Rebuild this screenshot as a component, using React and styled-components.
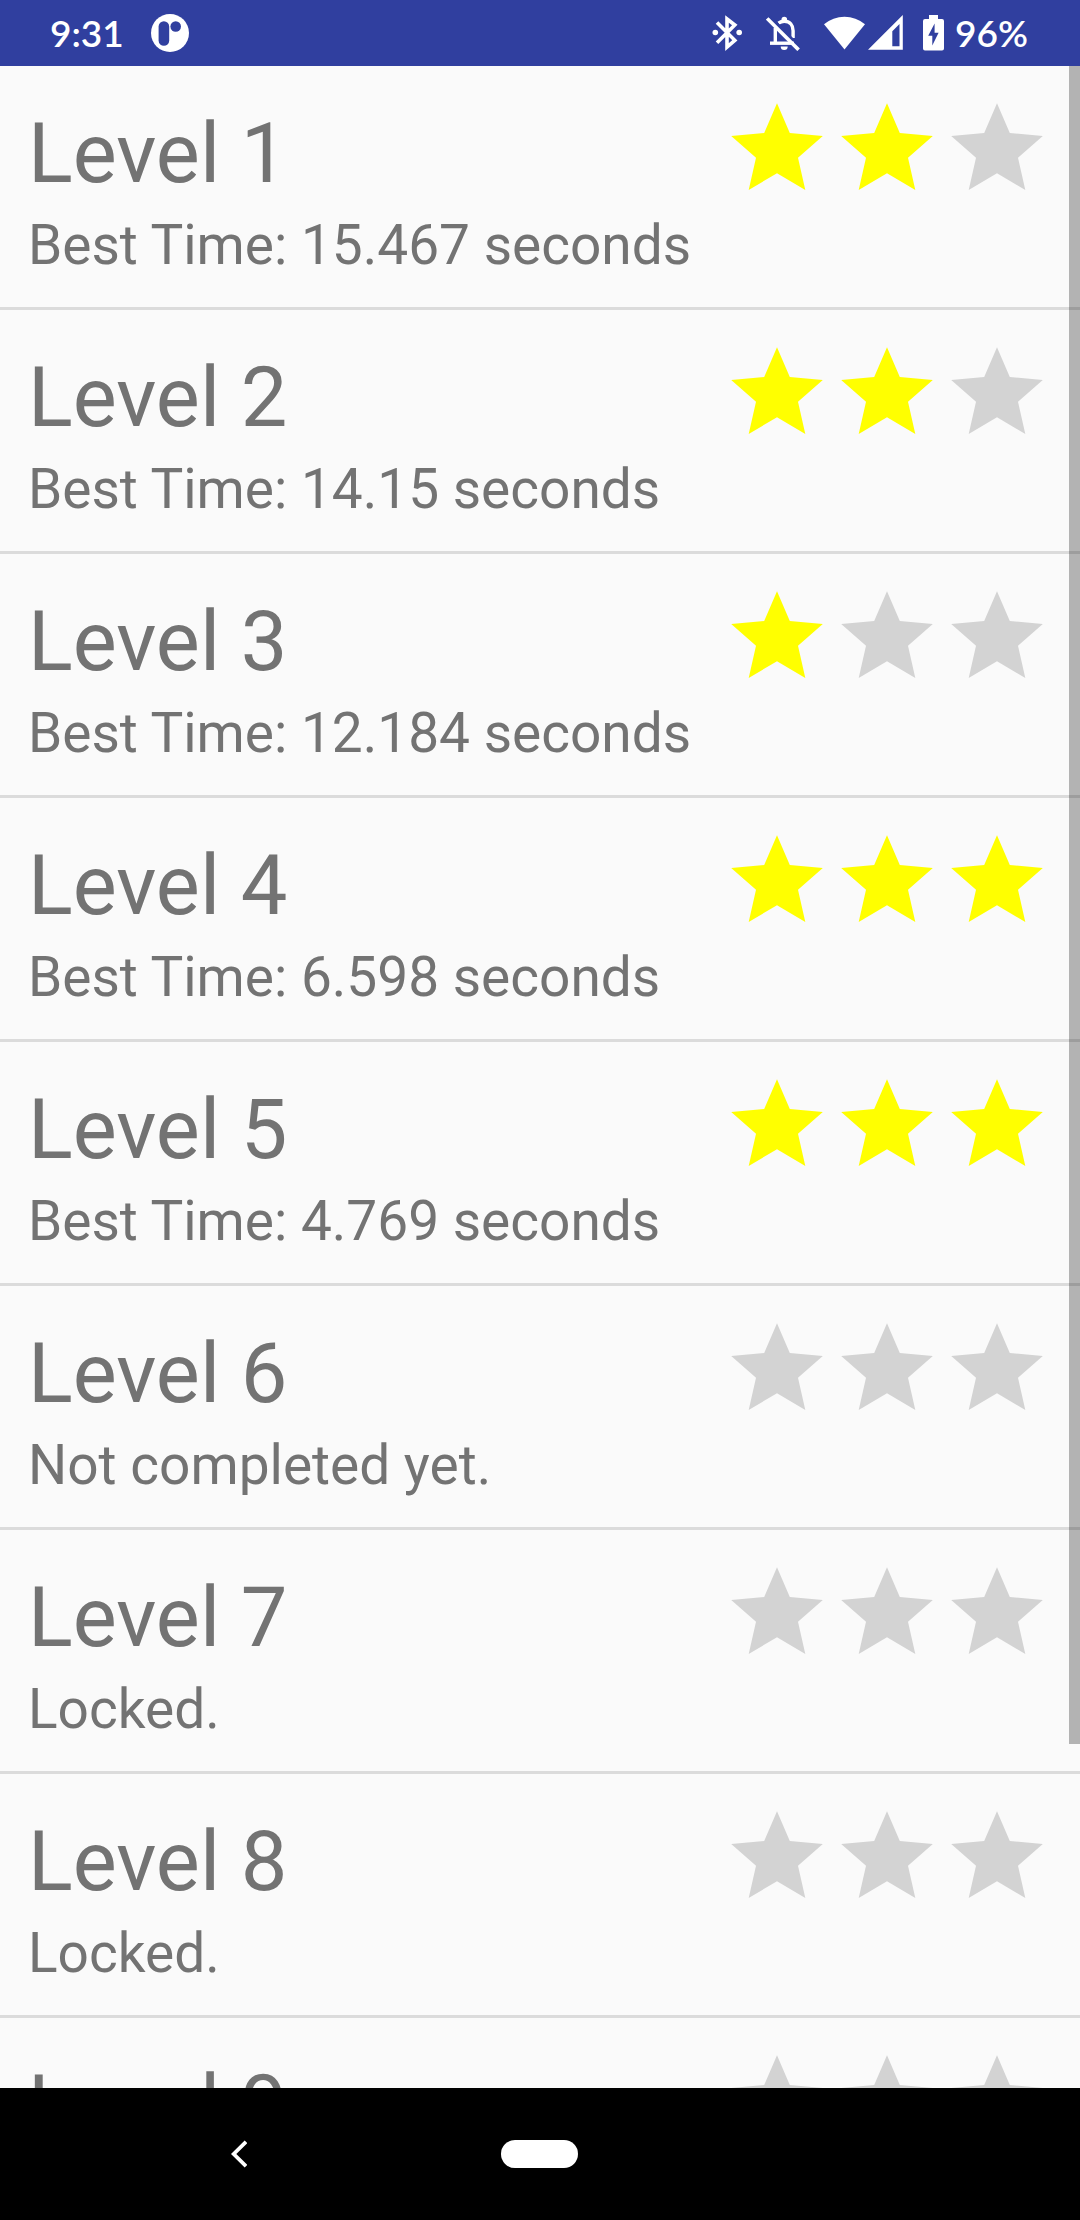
import React from "react";
import styled, { createGlobalStyle } from "styled-components";

const GlobalStyle = createGlobalStyle`
  *, *::before, *::after { box-sizing: border-box; }
  body {
    margin: 0;
    background: #fafafa;
    font-family: Roboto, "Liberation Sans", sans-serif;
  }
`;

const Screen = styled.div`
  display: flex;
  flex-direction: column;
  height: 100vh;
`;

const StatusBar = styled.header`
  display: flex;
  align-items: center;
  justify-content: space-between;
  flex: none;
  height: 66px;
  padding: 0 52px 0 50px;
  background: #303f9f;
  color: #fff;
`;

const StatusGroup = styled.div`
  display: flex;
  align-items: center;
  gap: ${(p) => p.$gap}px;
`;

const StatusText = styled.span`
  font-family: Lato, "Liberation Sans", sans-serif;
  font-size: 37px;
  font-weight: 600;
  line-height: 48px;
`;

const Icon = styled.svg`
  display: block;
  flex: none;
`;

const ListPane = styled.main`
  position: relative;
  flex: 1;
  min-height: 0;
  overflow: hidden;
`;

const LevelList = styled.ul`
  margin: 0;
  padding: 0;
  list-style: none;
`;

const LevelItem = styled.li`
  border-bottom: 3px solid rgba(0, 0, 0, 0.12);
`;

const LevelButton = styled.button`
  display: flex;
  align-items: flex-start;
  justify-content: space-between;
  width: 100%;
  padding: 29px 28px 30px;
  border: 0;
  background: transparent;
  color: #737373;
  font-family: inherit;
  text-align: left;
`;

const LevelText = styled.span`
  display: flex;
  flex-direction: column;
`;

const LevelName = styled.span`
  font-size: 83px;
  line-height: 118px;
`;

const LevelStatus = styled.span`
  font-size: 55px;
  line-height: 64px;
`;

const Stars = styled.span`
  display: flex;
  flex: none;
`;

const StarIcon = styled.svg`
  display: block;
  width: 110px;
  height: 110px;
  fill: ${(p) => (p.$earned ? "#ffff00" : "#d3d3d3")};
`;

const ScrollThumb = styled.div`
  position: absolute;
  top: 0;
  right: 0;
  width: 11px;
  height: 83%;
  background: rgba(0, 0, 0, 0.284);
`;

const NavBar = styled.nav`
  display: grid;
  grid-template-columns: repeat(3, 1fr);
  flex: none;
  height: 132px;
  padding: 0 88px;
  background: #000;
`;

const NavButton = styled.button`
  display: flex;
  align-items: center;
  justify-content: center;
  padding: 0;
  border: 0;
  background: transparent;
`;

const HomePill = styled.span`
  width: 77px;
  height: 28px;
  border-radius: 14px;
  background: #fff;
`;

const levels = [
  { id: 1, stars: 2, status: "Best Time: 15.467 seconds" },
  { id: 2, stars: 2, status: "Best Time: 14.15 seconds" },
  { id: 3, stars: 1, status: "Best Time: 12.184 seconds" },
  { id: 4, stars: 3, status: "Best Time: 6.598 seconds" },
  { id: 5, stars: 3, status: "Best Time: 4.769 seconds" },
  { id: 6, stars: 0, status: "Not completed yet." },
  { id: 7, stars: 0, status: "Locked." },
  { id: 8, stars: 0, status: "Locked." },
  { id: 9, stars: 0, status: "Locked." },
];

function Star({ earned }) {
  return (
    <StarIcon $earned={earned} viewBox="0 0 110 110" aria-hidden="true">
      <path d="M55 8.3 67.8 38 100.8 41 76 62.8 83.3 95 55 78.2 26.7 95 34 62.8 9.2 41 42.2 38Z" />
    </StarIcon>
  );
}

function AppBadge() {
  return (
    <Icon width="38" height="38" viewBox="0 0 38 38" aria-hidden="true">
      <circle cx="19" cy="19" r="19" fill="#fff" />
      <rect x="7.6" y="7.2" width="10.6" height="24.6" rx="5.3" fill="#303f9f" />
      <circle cx="24.7" cy="12.5" r="5.3" fill="#303f9f" />
    </Icon>
  );
}

function BluetoothIcon() {
  return (
    <Icon width="30" height="36" viewBox="0 0 30 36" aria-hidden="true">
      <path
        d="M5 7.5 22.8 25.3 15 32V4L22.8 10 5 27.8"
        fill="none"
        stroke="#fff"
        strokeWidth="3.6"
      />
      <circle cx="3.3" cy="17.5" r="2.8" fill="#fff" />
      <circle cx="27.2" cy="17.5" r="2.8" fill="#fff" />
    </Icon>
  );
}

function BellOffIcon() {
  return (
    <Icon width="34" height="36" viewBox="0 0 34 36" aria-hidden="true">
      <g fill="none" stroke="#fff" strokeWidth="3.4">
        <path d="M9.3 13V28" />
        <path d="M4 28.2H28" />
        <path d="M12.5 8.2C14.5 6.7 16.3 6.2 18.3 6.2c5.5 0 8.8 4 8.8 9.5V23" />
      </g>
      <path d="M15.5 7V4.5a2.8 2.8 0 0 1 5.6 0V7Z" fill="#fff" />
      <path d="M14.7 31.6h7a3.5 3.5 0 0 1-7 0Z" fill="#fff" />
      <path d="M3.5 .8 34.5 31.8" stroke="#303f9f" strokeWidth="2" />
      <path d="M1.2 3.4 32.6 34.8" stroke="#fff" strokeWidth="3.6" />
    </Icon>
  );
}

function WifiIcon() {
  return (
    <Icon width="41" height="36" viewBox="0 0 41 36" aria-hidden="true">
      <path d="M0 9.2A32 32 0 0 1 41 9.2L20.5 34.5Z" fill="#fff" />
    </Icon>
  );
}

function SignalIcon() {
  return (
    <Icon width="35" height="36" viewBox="0 0 35 36" aria-hidden="true">
      <path
        d="M0 34.8 34.8 0V34.8ZM24.3 16.3V31.3H31.5V9Z"
        fill="#fff"
        fillRule="evenodd"
      />
    </Icon>
  );
}

function BatteryIcon() {
  return (
    <Icon width="21" height="36" viewBox="0 0 21 36" aria-hidden="true">
      <path
        d="M6 0h9v4h4a2 2 0 0 1 2 2v27.5a2 2 0 0 1-2 2H2a2 2 0 0 1-2-2V6a2 2 0 0 1 2-2h4ZM11.6 8.5 5.2 20.8H9.3V30.5L15.6 17.8H11.6Z"
        fill="#fff"
        fillRule="evenodd"
      />
    </Icon>
  );
}

function LevelRow({ level }) {
  return (
    <LevelItem>
      <LevelButton type="button">
        <LevelText>
          <LevelName>Level {level.id}</LevelName>
          <LevelStatus>{level.status}</LevelStatus>
        </LevelText>
        <Stars role="img" aria-label={`${level.stars} of 3 stars`}>
          {[0, 1, 2].map((n) => (
            <Star key={n} earned={n < level.stars} />
          ))}
        </Stars>
      </LevelButton>
    </LevelItem>
  );
}

export default function App() {
  return (
    <Screen>
      <GlobalStyle />
      <StatusBar>
        <StatusGroup $gap={27}>
          <StatusText>9:31</StatusText>
          <AppBadge />
        </StatusGroup>
        <StatusGroup $gap={20}>
          <StatusGroup $gap={24}>
            <BluetoothIcon />
            <BellOffIcon />
            <StatusGroup $gap={3}>
              <WifiIcon />
              <SignalIcon />
            </StatusGroup>
          </StatusGroup>
          <StatusGroup $gap={11}>
            <BatteryIcon />
            <StatusText>96%</StatusText>
          </StatusGroup>
        </StatusGroup>
      </StatusBar>
      <ListPane>
        <LevelList>
          {levels.map((level) => (
            <LevelRow key={level.id} level={level} />
          ))}
        </LevelList>
        <ScrollThumb />
      </ListPane>
      <NavBar>
        <NavButton type="button" aria-label="Back">
          <Icon width="16" height="28" viewBox="0 0 16 28" aria-hidden="true">
            <path
              d="M15 1.8 2.7 14 15 26.2"
              fill="none"
              stroke="#fff"
              strokeWidth="3.8"
            />
          </Icon>
        </NavButton>
        <NavButton type="button" aria-label="Home">
          <HomePill />
        </NavButton>
      </NavBar>
    </Screen>
  );
}
